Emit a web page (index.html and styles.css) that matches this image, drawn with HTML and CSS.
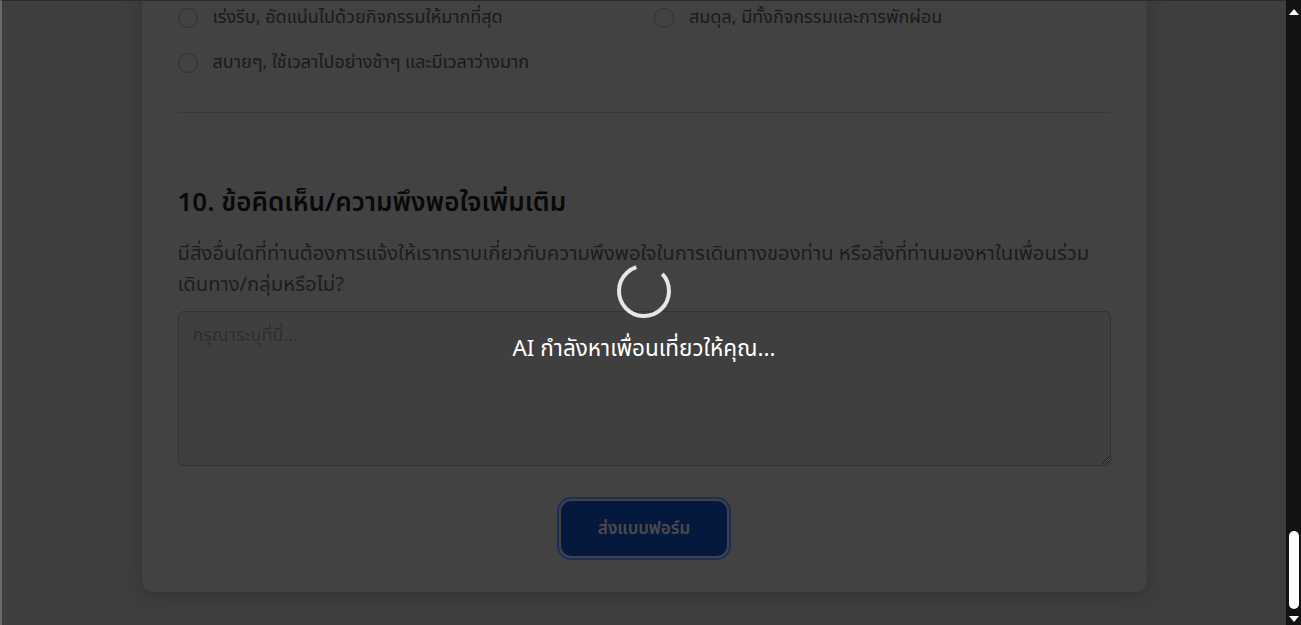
FILE: index.html
```html
<!DOCTYPE html>
<html lang="th">
<head>
<meta charset="utf-8">
<title>แบบฟอร์มความพึงพอใจ</title>
<link rel="stylesheet" href="styles.css">
</head>
<body>
<div class="viewport">
  <main class="page">
    <div class="page-scroll">
      <form class="card">
        <section class="question">
          <h2 class="q-title">9. รูปแบบการเดินทางที่ท่านชื่นชอบ</h2>
          <p class="q-text">ท่านชอบการเดินทางในรูปแบบใดมากที่สุด?</p>
          <div class="options">
            <label class="option"><input type="radio" name="pace" class="radio"><span>เร่งรีบ, อัดแน่นไปด้วยกิจกรรมให้มากที่สุด</span></label>
            <label class="option"><input type="radio" name="pace" class="radio"><span>สมดุล, มีทั้งกิจกรรมและการพักผ่อน</span></label>
            <label class="option"><input type="radio" name="pace" class="radio"><span>สบายๆ, ใช้เวลาไปอย่างช้าๆ และมีเวลาว่างมาก</span></label>
          </div>
        </section>
        <section class="question question-last">
          <h2 class="q-title">10. ข้อคิดเห็น/ความพึงพอใจเพิ่มเติม</h2>
          <p class="q-text">มีสิ่งอื่นใดที่ท่านต้องการแจ้งให้เราทราบเกี่ยวกับความพึงพอใจในการเดินทางของท่าน หรือสิ่งที่ท่านมองหาในเพื่อนร่วม<wbr><span class="nowrap">เดินทาง/กลุ่มหรือไม่?</span></p>
          <textarea class="comment" placeholder="กรุณาระบุที่นี่..."></textarea>
        </section>
        <div class="actions">
          <button type="button" class="submit">ส่งแบบฟอร์ม</button>
        </div>
      </form>
    </div>
    <div class="overlay">
      <svg class="spinner" width="56" height="56" viewBox="0 0 56 56" aria-hidden="true">
        <circle cx="28" cy="28" r="25" fill="none" stroke="#e6e6e6" stroke-width="4" stroke-dasharray="128 29" transform="rotate(-43 28 28)"/>
      </svg>
      <p class="overlay-text">AI กำลังหาเพื่อนเที่ยวให้คุณ...</p>
    </div>
  </main>
  <div class="scrollbar" aria-hidden="true">
    <span class="arrow arrow-up"></span>
    <div class="track"><span class="thumb"></span></div>
    <span class="arrow arrow-down"></span>
  </div>
</div>
</body>
</html>
```
FILE: styles.css
```css
html, body {
  margin: 0;
  padding: 0;
  height: 100%;
  overflow: hidden;
}

body {
  font-family: "Noto Sans Thai", "Noto Sans", sans-serif;
}

.viewport {
  display: flex;
  height: 100vh;
}

.page {
  flex: 1;
  position: relative;
  overflow: hidden;
  background: #b1b1b1;
  border-left: 2px solid #6b6b6b;
  border-top: 1px solid #2c2c2c;
}

.page-scroll {
  height: 100%;
  box-sizing: border-box;
  display: flex;
  flex-direction: column;
  justify-content: flex-end;
  align-items: center;
  padding-bottom: 33px;
}

.card {
  flex-shrink: 0;
  width: 1005px;
  box-sizing: border-box;
  padding: 36px;
  background: #bdbdbd;
  border-radius: 12px;
  box-shadow: 0 4px 18px rgba(0, 0, 0, 0.18);
}

.question {
  padding-bottom: 37px;
  border-bottom: 1px solid #a3a3a3;
}

.question-last {
  border-bottom: none;
  padding-top: 74px;
  padding-bottom: 0;
}

.q-title {
  margin: 0 0 20px;
  font-size: 26px;
  font-weight: 600;
  line-height: 32px;
  color: #1c1c1c;
}

.q-text {
  margin: 0 0 10px;
  font-size: 20.25px;
  line-height: 31px;
  color: #555555;
}

.nowrap {
  white-space: nowrap;
}

.options {
  display: grid;
  grid-template-columns: 1fr 1fr;
  column-gap: 20px;
  row-gap: 20px;
  margin-top: 24px;
}

.option {
  display: flex;
  align-items: center;
  gap: 15px;
  font-size: 18px;
  line-height: 25px;
  color: #4c4c4c;
}

.radio {
  appearance: none;
  -webkit-appearance: none;
  margin: 0;
  width: 20px;
  height: 20px;
  border: 1px solid #898989;
  border-radius: 50%;
  background: #bdbdbd;
  flex-shrink: 0;
}

.comment {
  display: block;
  width: 100%;
  height: 155px;
  box-sizing: border-box;
  padding: 10px 14px;
  border: 1px solid #8f8f8f;
  border-radius: 6px;
  background: #b6b6b6;
  font-family: inherit;
  font-size: 18px;
  resize: vertical;
}

.comment::placeholder {
  color: #838383;
}

.actions {
  display: flex;
  justify-content: center;
  padding-top: 35px;
}

.submit {
  height: 55px;
  padding: 0 37px;
  border: none;
  border-radius: 10px;
  background: #1145b1;
  color: #d6d6d6;
  font-family: inherit;
  font-size: 17px;
  font-weight: 600;
  box-shadow: 0 0 0 2px #bdbdbd, 0 0 0 4px #4d89fb;
}

.overlay {
  position: absolute;
  inset: 0;
  background: rgba(0, 0, 0, 0.65);
  display: flex;
  flex-direction: column;
  align-items: center;
  justify-content: center;
  gap: 14px;
}

.spinner {
  display: block;
}

.overlay-text {
  margin: 0;
  color: #ffffff;
  font-family: "Noto Sans", "Noto Sans Thai", sans-serif;
  font-size: 22.5px;
  line-height: 30px;
}

.scrollbar {
  width: 15px;
  flex-shrink: 0;
  background: #121212;
  display: flex;
  flex-direction: column;
  align-items: center;
}

.arrow {
  width: 0;
  height: 0;
  border-left: 5px solid transparent;
  border-right: 5px solid transparent;
}

.arrow-up {
  margin-top: 9px;
  border-bottom: 6px solid #ffffff;
}

.arrow-down {
  margin-bottom: 3px;
  border-top: 6px solid #ffffff;
}

.track {
  flex: 1;
  width: 100%;
  display: flex;
  flex-direction: column;
  justify-content: flex-end;
  align-items: center;
  padding-bottom: 7px;
}

.thumb {
  display: block;
  width: 10px;
  height: 78px;
  border-radius: 5px;
  background: #ffffff;
}
```
